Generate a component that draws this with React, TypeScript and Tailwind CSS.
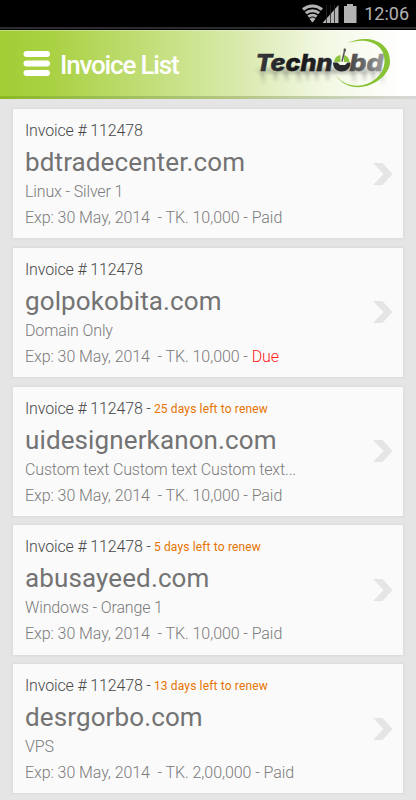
import React from "react";

interface Invoice {
  id: string;
  domain: string;
  plan: string;
  amount: string;
  status: "Paid" | "Due";
  renew?: string;
}

const invoices: Invoice[] = [
  { id: "112478", domain: "bdtradecenter.com", plan: "Linux - Silver 1", amount: "10,000", status: "Paid" },
  { id: "112478", domain: "golpokobita.com", plan: "Domain Only", amount: "10,000", status: "Due" },
  {
    id: "112478",
    domain: "uidesignerkanon.com",
    plan: "Custom text Custom text Custom text...",
    amount: "10,000",
    status: "Paid",
    renew: "25 days left to renew",
  },
  {
    id: "112478",
    domain: "abusayeed.com",
    plan: "Windows - Orange 1",
    amount: "10,000",
    status: "Paid",
    renew: "5 days left to renew",
  },
  {
    id: "112478",
    domain: "desrgorbo.com",
    plan: "VPS",
    amount: "2,00,000",
    status: "Paid",
    renew: "13 days left to renew",
  },
];

const StatusBar: React.FC = () => (
  <div className="flex h-[30px] shrink-0 flex-col bg-black">
    <div className="flex h-[27px] items-start justify-end pr-[7px]">
      <svg width="58" height="27" viewBox="0 0 58 27" fill="#b3b3b3" className="mr-[4px]">
        <g fill="none" stroke="#b3b3b3" strokeWidth="3">
          <path d="M1 9.500a14.800 14.800 0 0 1 19 0" />
          <path d="M3.800 13.200a10.500 10.500 0 0 1 13.400 0" />
          <path d="M6.300 16.700a6.500 6.500 0 0 1 8.400 0" />
        </g>
        <path d="M10.500 22.500l-3-3.600a4.600 4.600 0 0 1 6 0z" />
        <path d="M36.500 5v18H20.500z" />
        <path d="M24.500 5v18M28.500 5v18M32.500 5v18" stroke="#222" strokeWidth="0.800" />
        <path d="M42 6h3V4h6v2h3.500v17H42z" />
      </svg>
      <span className="pt-[4px] text-[18px] leading-[20px] text-[#b3b3b3]">12:06</span>
    </div>
    <div className="h-[2px] bg-[#2c2c2c]" />
  </div>
);

const MenuIcon: React.FC = () => (
  <svg width="27" height="26" viewBox="0 0 27 26" fill="#fff">
    <rect x="0.500" width="26.500" height="6" rx="3" />
    <rect x="0.500" y="9.500" width="26.500" height="6" rx="3" />
    <rect x="0.500" y="19" width="26.500" height="6" rx="3" />
  </svg>
);

const Logo: React.FC = () => (
  <svg width="150" height="56" viewBox="0 0 150 56">
    <defs>
      <linearGradient id="ink" gradientUnits="userSpaceOnUse" x1="5" y1="0" x2="134" y2="0">
        <stop offset="0" stopColor="#3a3a3c" />
        <stop offset="0.300" stopColor="#161619" />
        <stop offset="0.650" stopColor="#303030" />
        <stop offset="1" stopColor="#a2a2a2" />
      </linearGradient>
      <linearGradient id="fade" gradientUnits="userSpaceOnUse" x1="0" y1="34" x2="0" y2="48">
        <stop offset="0" stopColor="#444" stopOpacity="0.250" />
        <stop offset="1" stopColor="#444" stopOpacity="0" />
      </linearGradient>
      <filter id="soft" filterUnits="userSpaceOnUse" x="-5" y="20" width="155" height="36">
        <feGaussianBlur stdDeviation="2" />
      </filter>
      <filter id="haze" filterUnits="userSpaceOnUse" x="-5" y="20" width="155" height="36">
        <feGaussianBlur stdDeviation="0.900" />
      </filter>
    </defs>
    <ellipse cx="68" cy="33.500" rx="64" ry="2.500" fill="#444" opacity="0.450" filter="url(#soft)" />
    {/* reflection under the wordmark */}
    <path
      d="M10 35l2 12M23 35l1 9M34 35l1 9M46 35l2 12M55 35l1 9M64 35l1 9M75 35l1 9M101 35l2 12M112 35l1 9M121 35l1 9M129 35l2 12"
      stroke="url(#fade)"
      strokeWidth="5"
      filter="url(#haze)"
    />
    <g
      fill="url(#ink)"
      stroke="url(#ink)"
      strokeWidth="0.500"
      fontFamily="'Inter', 'Open Sans', sans-serif"
      fontWeight="800"
      fontStyle="italic"
      fontSize="22.5"
    >
      <text x="3.500" y="34" textLength="77" lengthAdjust="spacingAndGlyphs">
        Techn
      </text>
      <text x="97.500" y="34" textLength="34" lengthAdjust="spacingAndGlyphs">
        bd
      </text>
    </g>
    <path d="M82 25a8 8 0 0 1 6.500-7v7zM92 18a8 8 0 0 1 5.500 7H92z" fill="#8cc63f" />
    <path d="M81 25.500h4.500l2.500 2.500h5l2.500-2.500h3c0 6-4 9-9 9s-8.500-3.500-8.500-9z" fill="#29292b" />
    <path d="M90 24.500l2.500-10.500" stroke="#555" strokeWidth="1.500" />
    <ellipse cx="92.800" cy="13" rx="1.300" ry="1.700" fill="#555" />
    <path
      d="M95 6.500C112-3 138 2 138 24.500c0 20-37 38-54 14.500c18 20 48.500 6 48.500-15C132.500 5 112 0 95 6.500z"
      fill="#86c232"
    />
  </svg>
);

const Header: React.FC = () => (
  <header className="flex h-[69px] shrink-0 flex-col bg-[linear-gradient(90deg,#a3ce36_0%,#a9d142_12%,#d1e69a_50%,#dcebb4_60%,#f2f8e3_78%,#ffffff_96%)]">
    <div className="h-px bg-white/30" />
    <div className="flex h-[65px] items-center pl-[23px]">
      <MenuIcon />
      <span className="w-[142px] pl-[10px] pt-[3px] text-[26px] font-medium leading-[30px] tracking-[-1.180px] whitespace-nowrap text-white">
        Invoice List
      </span>
      <div className="pl-[60px] pt-[2px]">
        <Logo />
      </div>
    </div>
    <div className="h-[3px] bg-linear-to-r from-[#8ab81d] via-[#b3c681] via-55% to-[#d8d8d8]" />
  </header>
);

const InvoiceCard: React.FC<{ invoice: Invoice }> = ({ invoice }) => (
  <div className="flex h-[129.250px] shrink-0 items-center justify-between bg-[#fafafa] pl-[12px] pr-[10px] shadow-[0_0_2px_1px_#dadada]">
    <div className="h-full whitespace-pre pt-[12px] font-light text-[#7b7b7b]">
      <div className="h-[20px] text-[16px] leading-[20px] tracking-[-0.150px] text-[#484848]">
        Invoice # {invoice.id}
        {invoice.renew && (
          <>
            <span className="tracking-[-0.400px]">{" - "}</span>
            <span className="inline-block -translate-y-px text-[12px] font-normal tracking-[0.150px] text-[#e67300]">
              {invoice.renew}
            </span>
          </>
        )}
      </div>
      <div className="pt-[5px] text-[26px] leading-[32px] font-normal tracking-[0.120px] text-[#737373]">
        {invoice.domain}
      </div>
      <div className="pt-[4px] text-[16px] leading-[20px] tracking-[-0.140px]">{invoice.plan}</div>
      <div className="pt-[6px] text-[16px] leading-[20px] tracking-[-0.080px]">
        {`Exp: 30 May, 2014  - TK. ${invoice.amount} - `}
        <span className={invoice.status === "Due" ? "text-[#ff1a1a]" : ""}>{invoice.status}</span>
      </div>
    </div>
    <svg width="20" height="22" viewBox="0 0 20 22" fill="#e5e5e5">
      <path d="M0 0h9.500l10 11l-10 11H0l10.500-11z" />
    </svg>
  </div>
);

export default function App() {
  return (
    <div className="flex h-[800px] w-[416px] flex-col overflow-hidden bg-[#e5e5e5] font-['Roboto',sans-serif]">
      <StatusBar />
      <Header />
      <main className="flex flex-col gap-[9.500px] px-[13px] pt-[10px]">
        {invoices.map((invoice) => (
          <InvoiceCard key={invoice.domain} invoice={invoice} />
        ))}
      </main>
    </div>
  );
}
